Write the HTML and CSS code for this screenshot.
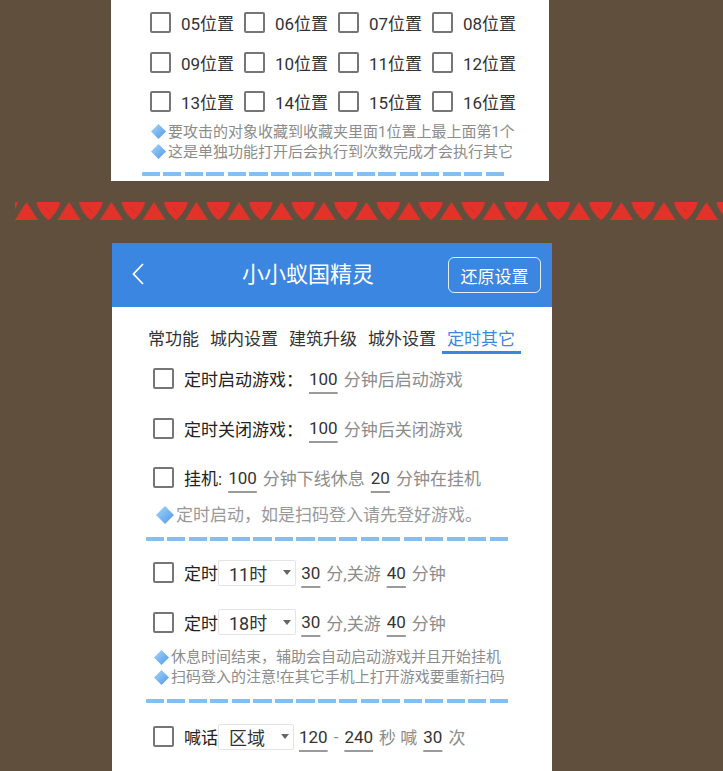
FILE: index.html
```html
<!DOCTYPE html>
<html lang="zh">
<head>
<meta charset="utf-8">
<link rel="stylesheet" href="styles.css">
</head>
<body>
<div class="top-panel">
  <div class="pos-grid">
    <div class="pos"><span class="cb"></span>05位置</div>
    <div class="pos"><span class="cb"></span>06位置</div>
    <div class="pos"><span class="cb"></span>07位置</div>
    <div class="pos"><span class="cb"></span>08位置</div>
    <div class="pos"><span class="cb"></span>09位置</div>
    <div class="pos"><span class="cb"></span>10位置</div>
    <div class="pos"><span class="cb"></span>11位置</div>
    <div class="pos"><span class="cb"></span>12位置</div>
    <div class="pos"><span class="cb"></span>13位置</div>
    <div class="pos"><span class="cb"></span>14位置</div>
    <div class="pos"><span class="cb"></span>15位置</div>
    <div class="pos"><span class="cb"></span>16位置</div>
  </div>
  <div class="notes-sm top-notes">
    <p><svg class="dia" viewBox="0 0 16 16"><defs><linearGradient id="dg" x1="0" y1="0" x2="1" y2="1"><stop offset="0" stop-color="#a9d6fa"/><stop offset="1" stop-color="#4b98e8"/></linearGradient></defs><path d="M8 0 L16 8 L8 16 L0 8Z" fill="url(#dg)"/></svg>要攻击的对象收藏到收藏夹里面1位置上最上面第1个</p>
    <p><svg class="dia" viewBox="0 0 16 16"><path d="M8 0 L16 8 L8 16 L0 8Z" fill="url(#dg)"/></svg>这是单独功能打开后会执行到次数完成才会执行其它</p>
  </div>
  <div class="dash dash-top"></div>
</div>

<svg class="zigzag" width="723" height="18" viewBox="0 0 723 18">
  <defs>
    <pattern id="tri" x="15" y="0" width="42.5" height="18" patternUnits="userSpaceOnUse">
      <path d="M0 18 L11.5 0 L23 18 Z" fill="#e2322a"/>
      <path d="M21.7 0 H45 C44.5 6 38 15 33.35 18 C28.7 15 22.2 6 21.7 0 Z" fill="#e2322a"/>
      <path d="M-20.8 0 H2.5 C2 6 -4.5 15 -9.15 18 C-13.8 15 -20.3 6 -20.8 0 Z" fill="#e2322a"/>
      <path d="M30 5 L35 11" stroke="#c42a23" stroke-width="1" opacity=".6"/>
    </pattern>
  </defs>
  <rect x="15" width="708" height="18" fill="url(#tri)"/>
</svg>

<div class="app">
  <div class="appbar">
    <div class="back"><svg width="12" height="22" viewBox="0 0 12 22"><path d="M11 1 L1.5 11 L11 21" fill="none" stroke="#fff" stroke-width="1.8"/></svg></div>
    <div class="title">小小蚁国精灵</div>
    <div class="reset">还原设置</div>
  </div>
  <div class="tabs">
    <div class="tab">常功能</div>
    <div class="tab">城内设置</div>
    <div class="tab">建筑升级</div>
    <div class="tab">城外设置</div>
    <div class="tab active">定时其它</div>
  </div>

  <div class="row"><span class="cb"></span><span class="lbl">定时启动游戏：</span><span class="fld">100</span>分钟后启动游戏</div>
  <div class="row"><span class="cb"></span><span class="lbl">定时关闭游戏：</span><span class="fld">100</span>分钟后关闭游戏</div>
  <div class="row"><span class="cb"></span><span class="lbl">挂机:</span><span class="fld">100</span>分钟下线休息<span class="fld">20</span>分钟在挂机</div>
  <div class="note-lg"><svg class="dia dia-lg" viewBox="0 0 16 16"><path d="M8 0 L16 8 L8 16 L0 8Z" fill="url(#dg)"/></svg>定时启动，如是扫码登入请先登好游戏。</div>
  <div class="dash dash-bottom"></div>

  <div class="row row-first"><span class="cb"></span><span class="lbl">定时</span><span class="sel">11时<span class="caret"></span></span><span class="fld">30</span>分,关游<span class="fld">40</span>分钟</div>
  <div class="row"><span class="cb"></span><span class="lbl">定时</span><span class="sel">18时<span class="caret"></span></span><span class="fld">30</span>分,关游<span class="fld">40</span>分钟</div>
  <div class="notes-sm bottom-notes">
    <p><svg class="dia" viewBox="0 0 16 16"><path d="M8 0 L16 8 L8 16 L0 8Z" fill="url(#dg)"/></svg>休息时间结束，辅助会自动启动游戏并且开始挂机</p>
    <p><svg class="dia" viewBox="0 0 16 16"><path d="M8 0 L16 8 L8 16 L0 8Z" fill="url(#dg)"/></svg>扫码登入的注意!在其它手机上打开游戏要重新扫码</p>
  </div>
  <div class="dash dash-bottom dash-gap"></div>

  <div class="row row-last"><span class="cb"></span><span class="lbl">喊话</span><span class="sel">区域<span class="caret"></span></span><span class="fld">120</span>-<span class="fld">240</span>秒 喊<span class="fld">30</span>次</div>
</div>
</body>
</html>
```
FILE: styles.css
```css
html, body {
  margin: 0;
  padding: 0;
}
body {
  background: #614f3e;
  font-family: Roboto, "Noto Sans CJK SC", sans-serif;
  overflow: hidden;
  height: 771px;
}
p { margin: 0; }

.top-panel {
  margin-left: 111px;
  width: 438px;
  height: 181px;
  background: #fff;
  box-sizing: border-box;
  padding-top: 3px;
}
.pos-grid {
  display: grid;
  grid-template-columns: repeat(4, 94px);
  grid-auto-rows: 39.5px;
  padding-left: 39px;
}
.pos {
  display: flex;
  align-items: center;
  gap: 10px;
  font-size: 17px;
  color: #333;
  white-space: nowrap;
}
.cb {
  flex: none;
  width: 21px;
  height: 21px;
  box-sizing: border-box;
  border: 2px solid #767676;
  border-radius: 2px;
}

.notes-sm {
  font-size: 15px;
  line-height: 20px;
  color: #8c8c8c;
  white-space: nowrap;
}
.notes-sm p {
  display: flex;
  align-items: center;
}
.top-notes { padding-left: 39px; }
.bottom-notes { padding-left: 41px; }
.dia {
  flex: none;
  width: 17px;
  height: 15px;
  margin-right: 1px;
}
.dia-lg {
  width: 20px;
  height: 18px;
}

.dash {
  height: 4px;
  background: repeating-linear-gradient(90deg, #83bff0 0 18px, transparent 18px 21.5px);
  border-radius: 1px;
}
.dash-top {
  margin: 10.5px 0 0 31px;
  width: 365px;
}
.dash-bottom {
  margin: 10.5px 0 0 34px;
  width: 364px;
}
.dash-gap { margin-top: 12px; }

.zigzag {
  display: block;
  margin-top: 21px;
}

.app {
  margin: 23px 0 0 112px;
  width: 440px;
  height: 540px;
  background: #fff;
}
.appbar {
  display: flex;
  align-items: center;
  height: 64px;
  background: #3a86e0;
}
.back {
  width: 56px;
  box-sizing: border-box;
  padding-left: 20px;
  display: flex;
  align-items: center;
  margin-top: -3px;
}
.title {
  flex: 1;
  text-align: center;
  color: #fff;
  font-size: 22px;
  line-height: 30px;
}
.reset {
  margin-right: 11px;
  width: 93px;
  height: 36px;
  box-sizing: border-box;
  border: 1.5px solid rgba(255, 255, 255, 0.85);
  border-radius: 6px;
  color: #fff;
  font-size: 17px;
  display: flex;
  align-items: center;
  justify-content: center;
}

.tabs {
  display: flex;
  padding: 20px 0 0 30.5px;
}
.tab {
  padding: 0 5.5px;
  font-size: 17px;
  line-height: 24px;
  color: #333;
  border-bottom: 3px solid transparent;
  white-space: nowrap;
}
.tab.active {
  color: #3a86e0;
  border-bottom-color: #3a86e0;
}

.row {
  display: flex;
  align-items: center;
  height: 49.5px;
  padding-left: 41px;
  font-size: 17px;
  color: #8c8c8c;
  white-space: nowrap;
}
.row .cb { margin-right: 10px; }
.row-first { margin-top: 7px; }
.row-last { margin-top: 9px; }
.lbl { color: #222; }
.fld {
  color: #333;
  margin: 0 6px;
  text-decoration: underline;
  text-decoration-color: #9a9a9a;
  text-decoration-thickness: 2px;
  text-underline-offset: 7px;
}
.sel {
  display: flex;
  align-items: center;
  height: 26px;
  box-sizing: border-box;
  border: 1px solid #e4e4e4;
  border-radius: 2px;
  padding: 0 4px 0 10px;
  font-size: 18px;
  color: #333;
}
.sel + .fld { margin-left: 5px; }
.caret {
  margin-left: 16px;
  width: 0;
  height: 0;
  border-left: 4.5px solid transparent;
  border-right: 4.5px solid transparent;
  border-top: 5px solid #666;
}

.note-lg {
  display: flex;
  align-items: center;
  padding-left: 43px;
  font-size: 17px;
  line-height: 24px;
  color: #999;
  white-space: nowrap;
}
```
